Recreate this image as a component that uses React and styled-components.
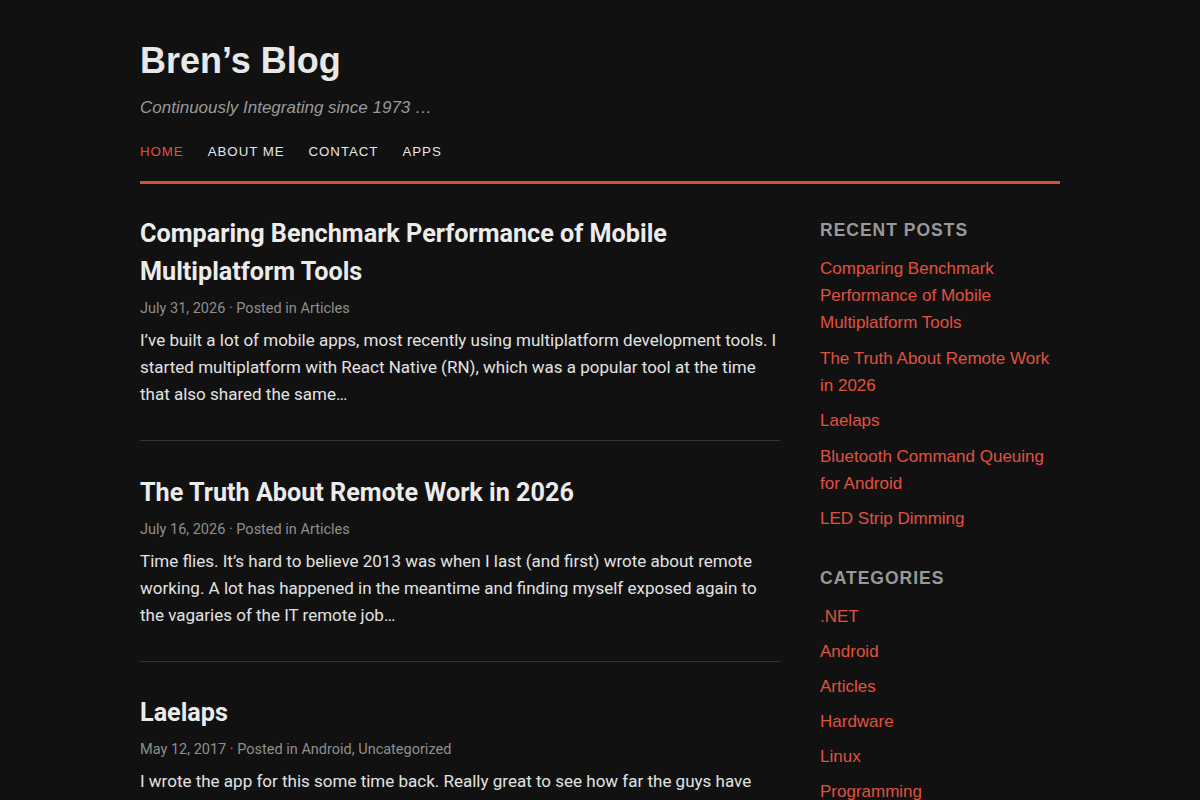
import React from "react";
import styled, { createGlobalStyle } from "styled-components";

const GlobalStyle = createGlobalStyle`
  html, body {
    margin: 0;
    padding: 0;
    background: #111111;
  }
  body {
    font-family: "Liberation Sans", Arial, sans-serif;
    color: #e6e6e6;
  }
  a {
    text-decoration: none;
  }
`;

const posts = [
  {
    title: "Comparing Benchmark Performance of Mobile Multiplatform Tools",
    date: "July 31, 2026",
    cats: ["Articles"],
    excerpt:
      "I’ve built a lot of mobile apps, most recently using multiplatform development tools. I started multiplatform with React Native (RN), which was a popular tool at the time that also shared the same…",
  },
  {
    title: "The Truth About Remote Work in 2026",
    date: "July 16, 2026",
    cats: ["Articles"],
    excerpt:
      "Time flies. It’s hard to believe 2013 was when I last (and first) wrote about remote working. A lot has happened in the meantime and finding myself exposed again to the vagaries of the IT remote job…",
  },
  {
    title: "Laelaps",
    date: "May 12, 2017",
    cats: ["Android", "Uncategorized"],
    excerpt:
      "I wrote the app for this some time back. Really great to see how far the guys have come since then with the project and the community that has grown around it…",
  },
];

const recent = [
  "Comparing Benchmark Performance of Mobile Multiplatform Tools",
  "The Truth About Remote Work in 2026",
  "Laelaps",
  "Bluetooth Command Queuing for Android",
  "LED Strip Dimming",
];

const categories = [".NET", "Android", "Articles", "Hardware", "Linux", "Programming", "Uncategorized"];

const nav = ["Home", "About Me", "Contact", "Apps"];

const App = () => {
  return (
    <Page>
      <GlobalStyle />
      <Header>
        <SiteTitle>Bren’s Blog</SiteTitle>
        <Tagline>Continuously Integrating since 1973 …</Tagline>
        <Nav>
          {nav.map((item, i) => (
            <NavLink key={item} href="#" $active={i === 0}>
              {item}
            </NavLink>
          ))}
        </Nav>
      </Header>
      <Layout>
        <Main>
          {posts.map((p) => (
            <Post key={p.title}>
              <PostTitle>{p.title}</PostTitle>
              <Meta>
                {p.date} · Posted in {p.cats.join(", ")}
              </Meta>
              <Excerpt>{p.excerpt}</Excerpt>
            </Post>
          ))}
        </Main>
        <Sidebar>
          <Widget>
            <WidgetTitle>Recent Posts</WidgetTitle>
            <WidgetList $gap="8.5px">
              {recent.map((r) => (
                <li key={r}>
                  <SideLink href="#">{r}</SideLink>
                </li>
              ))}
            </WidgetList>
          </Widget>
          <Widget>
            <WidgetTitle>Categories</WidgetTitle>
            <WidgetList $gap="8px">
              {categories.map((c) => (
                <li key={c}>
                  <SideLink href="#">{c}</SideLink>
                </li>
              ))}
            </WidgetList>
          </Widget>
        </Sidebar>
      </Layout>
    </Page>
  );
};

const Page = styled.div`
  width: 920px;
  margin: 0 auto;
  padding-top: 39px;
`;

const Header = styled.header`
  border-bottom: 3px solid #dd4c3b;
  padding-bottom: 19px;
`;

const SiteTitle = styled.h1`
  margin: 0;
  font-size: 36px;
  line-height: 44px;
  font-weight: 700;
  color: #e8e8e8;
`;

const Tagline = styled.p`
  margin: 14px 0 0;
  font-size: 17px;
  line-height: 22px;
  font-style: italic;
  color: #9a9a9a;
`;

const Nav = styled.nav`
  display: flex;
  gap: 24px;
  margin-top: 23px;
`;

const NavLink = styled.a`
  font-size: 13.3px;
  line-height: 20px;
  letter-spacing: 0.95px;
  text-transform: uppercase;
  color: ${(p) => (p.$active ? "#e0513f" : "#e6e6e6")};
`;

const Layout = styled.div`
  display: grid;
  grid-template-columns: 640px 240px;
  gap: 40px;
  padding-top: 31px;
`;

const Main = styled.main`
  display: flex;
  flex-direction: column;
`;

const Post = styled.article`
  padding-bottom: 32px;
  margin-bottom: 32.5px;
  border-bottom: 1px solid #333333;
`;

const PostTitle = styled.h2`
  margin: 0;
  font-family: Roboto, "Liberation Sans", sans-serif;
  font-size: 25.2px;
  line-height: 38px;
  font-weight: 700;
  color: #ececec;
`;

const Meta = styled.div`
  margin-top: 8px;
  font-family: Roboto, "Liberation Sans", sans-serif;
  font-size: 14.5px;
  line-height: 20px;
  color: #8f8f8f;
`;

const Excerpt = styled.p`
  margin: 8px 0 0;
  font-family: Roboto, "Liberation Sans", sans-serif;
  font-size: 17px;
  line-height: 27px;
  color: #e2e2e2;
`;

const Sidebar = styled.aside`
  display: flex;
  flex-direction: column;
  gap: 31px;
`;

const Widget = styled.section``;

const WidgetTitle = styled.h3`
  margin: 4px 0 14px;
  font-size: 17.5px;
  line-height: 22px;
  font-weight: 700;
  letter-spacing: 1px;
  text-transform: uppercase;
  color: #999999;
`;

const WidgetList = styled.ul`
  list-style: none;
  margin: 0;
  padding: 0;
  display: flex;
  flex-direction: column;
  gap: ${(p) => p.$gap};
`;

const SideLink = styled.a`
  font-size: 17px;
  line-height: 27px;
  color: #e0513f;
`;

export default App;
